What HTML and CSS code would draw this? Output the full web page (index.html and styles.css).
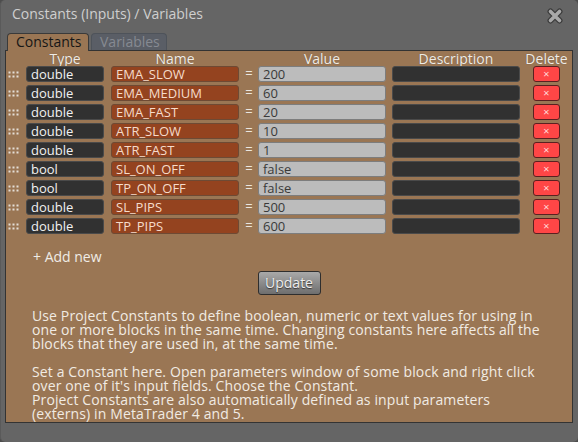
FILE: index.html
```html
<!DOCTYPE html>
<html>
<head>
<meta charset="utf-8">
<link rel="stylesheet" href="styles.css">
</head>
<body>
<div class="window">
  <div class="titlebar">
    <span class="title">Constants (Inputs) / Variables</span>
    <svg class="close" width="16" height="16" viewBox="0 0 16 16">
      <path d="M3.5 3.5 L12.5 12.5 M12.5 3.5 L3.5 12.5" stroke="#3a3a3a" stroke-width="6" stroke-linecap="round"/>
      <path d="M3.5 3.5 L12.5 12.5 M12.5 3.5 L3.5 12.5" stroke="#a9a9a9" stroke-width="3.6" stroke-linecap="round"/>
    </svg>
  </div>
  <div class="tabs">
    <div class="tab active">Constants</div>
    <div class="tab">Variables</div>
  </div>
  <div class="panel">
    <div class="row head">
      <div class="c-grip"></div>
      <div class="c-type">Type</div>
      <div class="c-name">Name</div>
      <div class="c-eq"></div>
      <div class="c-val">Value</div>
      <div class="c-desc">Description</div>
      <div class="c-del">Delete</div>
    </div>
    <div class="rows">
      <div class="row"><div class="c-grip"><span class="grip"></span></div><div class="c-type box type">double</div><div class="c-name box name">EMA_SLOW</div><div class="c-eq eq">=</div><div class="c-val box val">200</div><div class="c-desc box desc"></div><div class="c-del del">×</div></div>
      <div class="row"><div class="c-grip"><span class="grip"></span></div><div class="c-type box type">double</div><div class="c-name box name">EMA_MEDIUM</div><div class="c-eq eq">=</div><div class="c-val box val">60</div><div class="c-desc box desc"></div><div class="c-del del">×</div></div>
      <div class="row"><div class="c-grip"><span class="grip"></span></div><div class="c-type box type">double</div><div class="c-name box name">EMA_FAST</div><div class="c-eq eq">=</div><div class="c-val box val">20</div><div class="c-desc box desc"></div><div class="c-del del">×</div></div>
      <div class="row"><div class="c-grip"><span class="grip"></span></div><div class="c-type box type">double</div><div class="c-name box name">ATR_SLOW</div><div class="c-eq eq">=</div><div class="c-val box val">10</div><div class="c-desc box desc"></div><div class="c-del del">×</div></div>
      <div class="row"><div class="c-grip"><span class="grip"></span></div><div class="c-type box type">double</div><div class="c-name box name">ATR_FAST</div><div class="c-eq eq">=</div><div class="c-val box val">1</div><div class="c-desc box desc"></div><div class="c-del del">×</div></div>
      <div class="row"><div class="c-grip"><span class="grip"></span></div><div class="c-type box type">bool</div><div class="c-name box name">SL_ON_OFF</div><div class="c-eq eq">=</div><div class="c-val box val">false</div><div class="c-desc box desc"></div><div class="c-del del">×</div></div>
      <div class="row"><div class="c-grip"><span class="grip"></span></div><div class="c-type box type">bool</div><div class="c-name box name">TP_ON_OFF</div><div class="c-eq eq">=</div><div class="c-val box val">false</div><div class="c-desc box desc"></div><div class="c-del del">×</div></div>
      <div class="row"><div class="c-grip"><span class="grip"></span></div><div class="c-type box type">double</div><div class="c-name box name">SL_PIPS</div><div class="c-eq eq">=</div><div class="c-val box val">500</div><div class="c-desc box desc"></div><div class="c-del del">×</div></div>
      <div class="row"><div class="c-grip"><span class="grip"></span></div><div class="c-type box type">double</div><div class="c-name box name">TP_PIPS</div><div class="c-eq eq">=</div><div class="c-val box val">600</div><div class="c-desc box desc"></div><div class="c-del del">×</div></div>
    </div>
    <div class="addnew">+ Add new</div>
    <div class="btnrow"><div class="update">Update</div></div>
    <div class="help">
      <p>Use Project Constants to define boolean, numeric or text values for using in one or more blocks in the same time. Changing constants here affects all the blocks that they are used in, at the same time.</p>
      <p>Set a Constant here. Open parameters window of some block and right click over one of it's input fields. Choose the Constant.<br>Project Constants are also automatically defined as input parameters (externs) in MetaTrader 4 and 5.</p>
    </div>
  </div>
</div>
</body>
</html>
```
FILE: styles.css
```css
* { box-sizing: border-box; }
html, body { margin: 0; padding: 0; }
body {
  width: 578px;
  height: 442px;
  background: #4d4d4d;
  font-family: "Open Sans", "Noto Sans", "DejaVu Sans", sans-serif;
  overflow: hidden;
}
.window {
  width: 578px;
  height: 442px;
  background: #656565;
  border-radius: 5px;
  border-left: 1px solid #5a5a5a;
  padding: 0 5px 0 4px;
  display: flex;
  flex-direction: column;
}
.titlebar {
  height: 33px;
  display: flex;
  align-items: flex-start;
  justify-content: space-between;
  padding: 4px 7px 0 7px;
}
.title {
  color: #cfcfcf;
  font-size: 14px;
  line-height: 20px;
}
.close { margin-top: 4px; margin-right: 3px; }
.tabs {
  display: flex;
  height: 17px;
  padding-left: 2px;
  gap: 2px;
}
.tab {
  height: 17px;
  border: 1px solid #4e535a;
  border-bottom: none;
  border-radius: 4px 4px 0 0;
  font-size: 14px;
  line-height: 16px;
  padding: 0 0 0 8px;
  background: #5a5e66;
  color: #868a92;
  width: 76px;
}
.tab.active {
  background: #9a7654;
  color: #161616;
  border-color: #3a3a3a;
  width: 82px;
  position: relative;
  z-index: 1;
  height: 18px;
}
.panel {
  width: 568px;
  height: 373px;
  background: #9a7654;
  border: 1px solid #333;
  display: flex;
  flex-direction: column;
}
.row {
  display: flex;
  height: 16px;
  align-items: stretch;
}
.head {
  height: 18px;
  color: #f0ece6;
  font-size: 14px;
  line-height: 15px;
  text-shadow: 0 0 1px rgba(0,0,0,0.3);
}
.head > div { text-align: center; white-space: nowrap; display: flex; justify-content: center; }
.rows { display: flex; flex-direction: column; gap: 3px; }
.c-grip { width: 20px; display: flex; align-items: center; padding-left: 2px; }
.c-type { width: 78px; }
.c-name { width: 128px; margin-left: 7px; }
.c-eq { width: 19px; }
.c-val { width: 128px; }
.c-desc { width: 128px; margin-left: 6px; }
.c-del { width: 27px; margin-left: 13px; }
.grip {
  display: block;
  width: 11px;
  height: 7px;
  background-image: radial-gradient(circle, #e4ded6 0.9px, transparent 1.2px);
  background-size: 4px 4px;
  background-position: -0.5px -0.5px;
}
.box {
  border-radius: 3px;
  font-size: 13px;
  line-height: 14px;
  padding-left: 4px;
  white-space: nowrap;
}
.type { background: #313131; border: 1px solid #4a4a4a; color: #f2f2f2; }
.name { background: #94431f; border: 1px solid #6e4a34; color: #f6dccb; }
.val { background: #bcbcbc; border: 1px solid #7d7d7d; color: #3a3a3a; }
.desc { background: #313131; border: 1px solid #4a4a4a; }
.eq {
  color: #ebe6df;
  font-size: 13px;
  line-height: 15px;
  text-align: center;
  padding-left: 1px;
}
.del {
  background: #ff4646;
  border: 1px solid #5a2020;
  border-radius: 3px;
  color: #ffd6d6;
  font-size: 11px;
  line-height: 14px;
  text-align: center;
}
.addnew {
  margin: 15px 0 0 27px;
  color: #f0ece6;
  font-size: 14px;
  line-height: 16px;
}
.btnrow {
  display: flex;
  justify-content: center;
  margin-top: 6px;
}
.update {
  width: 63px;
  height: 24px;
  border: 1px solid #2e2e2e;
  border-radius: 3px;
  background: linear-gradient(#a9a9a9, #6e6e6e);
  color: #eeeeee;
  font-size: 14px;
  line-height: 21px;
  text-align: center;
  text-shadow: 0 1px 1px #333;
}
.help {
  margin: 14px 0 0 26px;
  width: 516px;
  color: #f1ebe3;
  font-size: 14px;
  line-height: 14px;
  letter-spacing: 0.12px;
}
.help p { margin: 0 0 14px 0; }
```
